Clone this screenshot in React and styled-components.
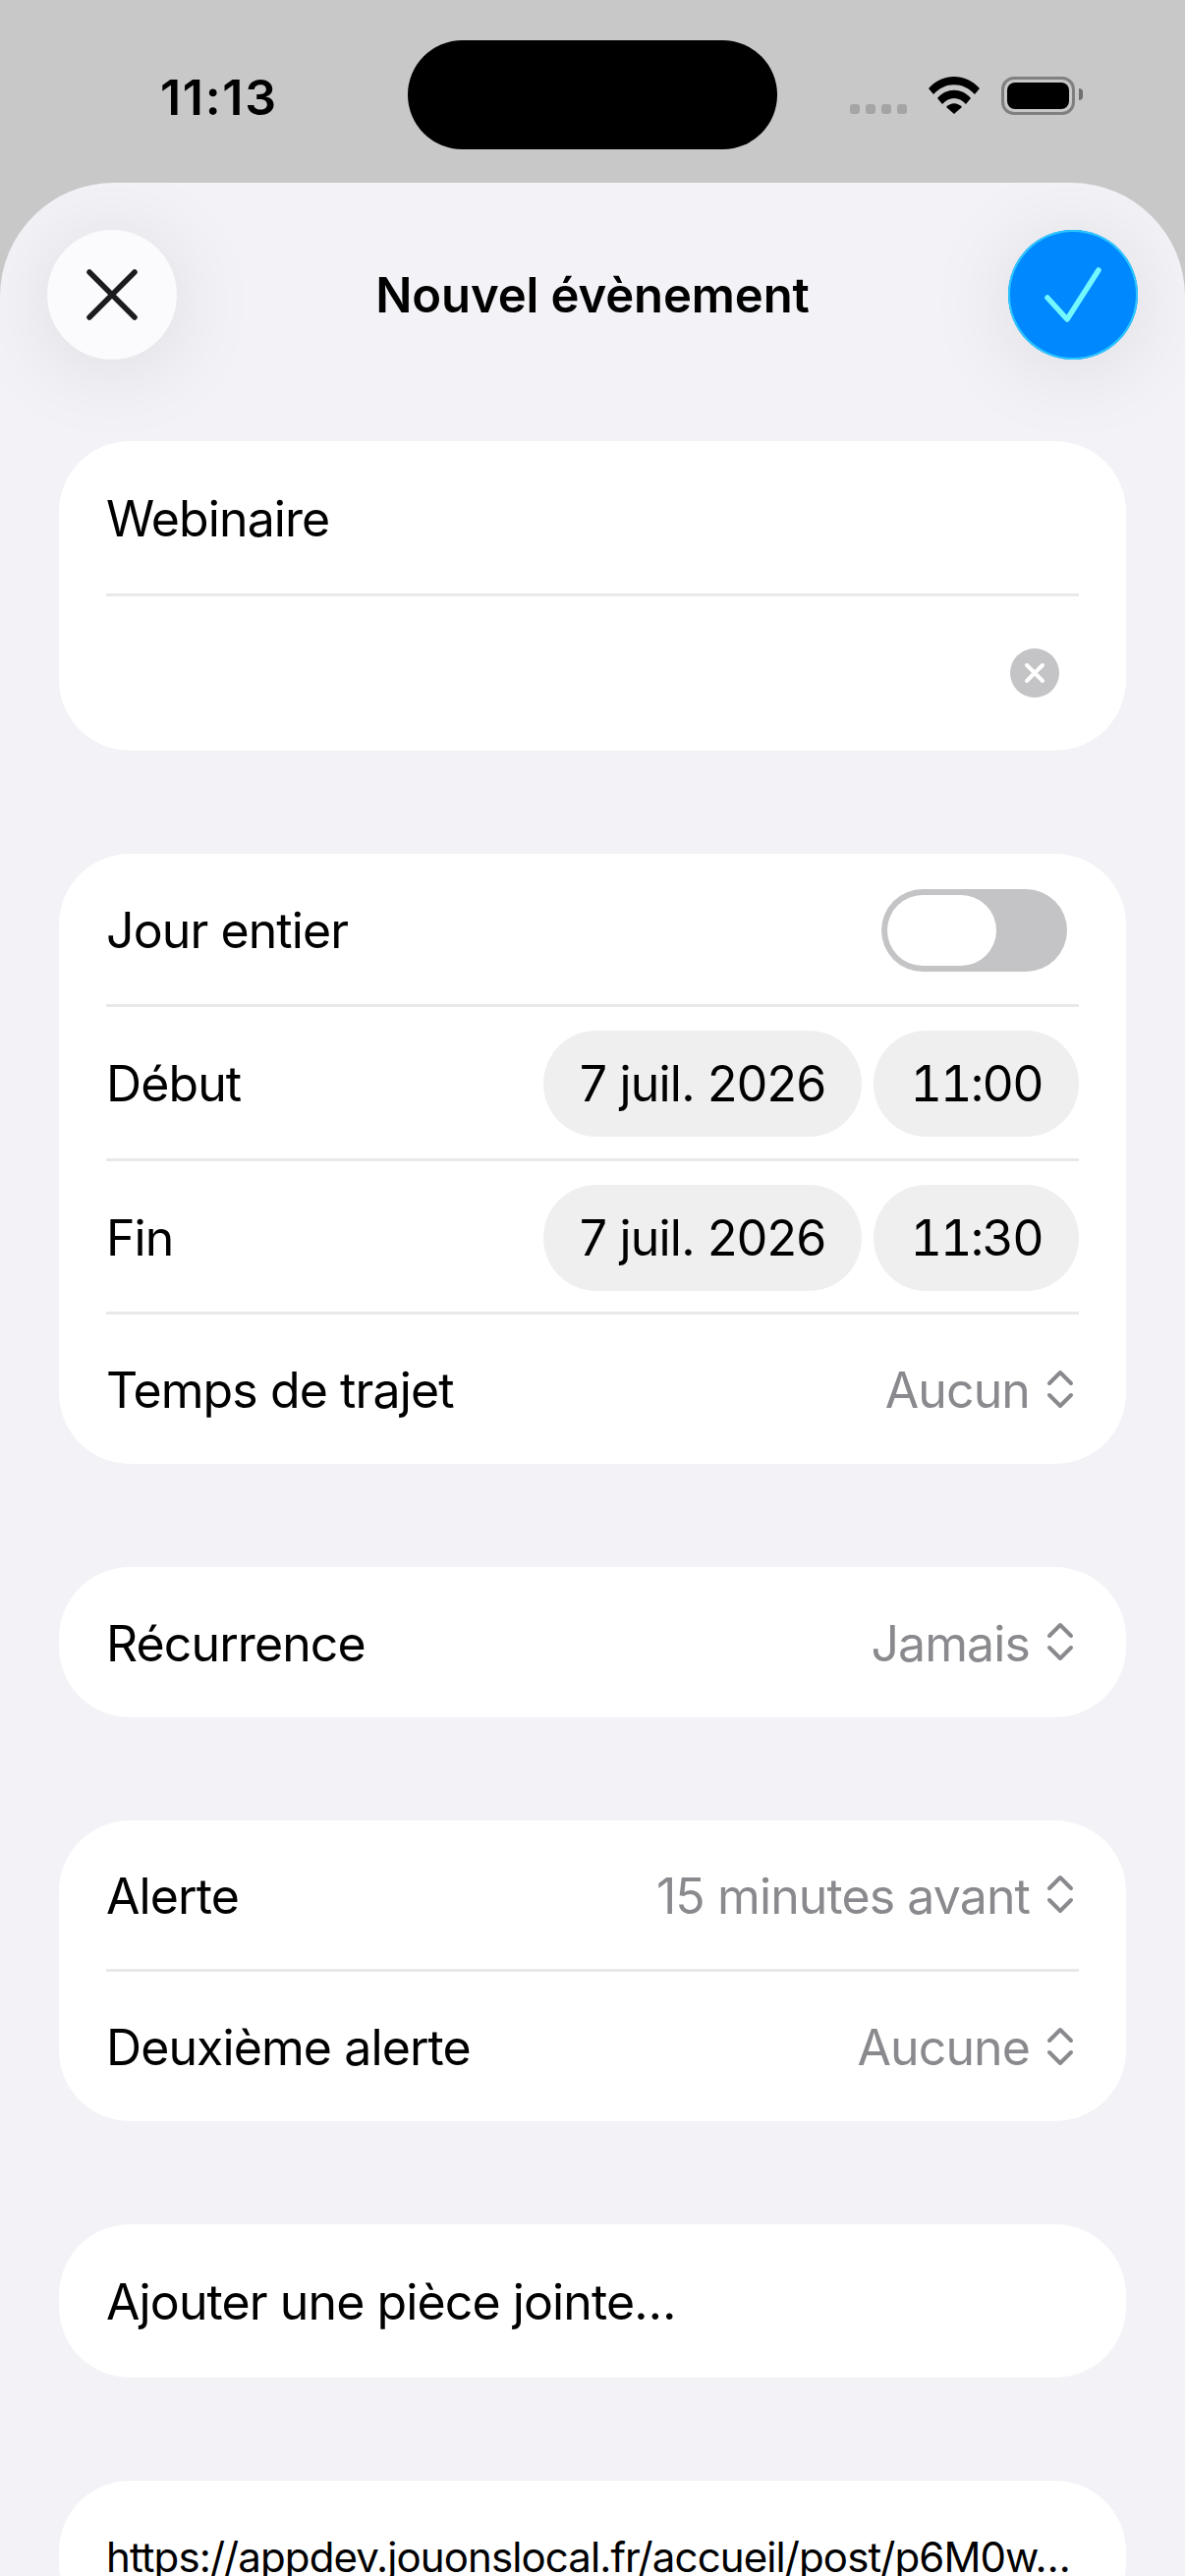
import styled, { createGlobalStyle } from "styled-components";

const GlobalStyle = createGlobalStyle`
  html, body {
    margin: 0;
    padding: 0;
    background: #c8c8c8;
  }
  * {
    box-sizing: border-box;
  }
`;

const Screen = styled.div`
  width: 1206px;
  height: 2622px;
  overflow: hidden;
  display: flex;
  flex-direction: column;
  background: #c8c8c8;
  font-family: Inter, "Liberation Sans", sans-serif;
  color: #000;
`;

const StatusBar = styled.div`
  height: 186px;
  flex: none;
  display: grid;
  grid-template-columns: 415px 376px 1fr;
  padding-top: 41px;
  align-items: start;
`;

const Clock = styled.div`
  font-size: 50px;
  font-weight: 600;
  line-height: 60px;
  margin: 28px 0 0 163px;
  letter-spacing: 1.7px;
`;

const Island = styled.div`
  height: 111px;
  border-radius: 56px;
  background: #000;
`;

const StatusIcons = styled.div`
  display: flex;
  align-items: flex-start;
  margin: 37px 0 0 74px;
`;

const Dots = styled.div`
  display: flex;
  gap: 6px;
  margin: 28px 22px 0 0;
`;

const Dot = styled.span`
  width: 10px;
  height: 10px;
  border-radius: 3px;
  background: #a5a5a5;
`;

const Battery = styled.div`
  width: 75px;
  height: 39px;
  margin-left: 22px;
  padding: 3px;
  border: 3px solid #808080;
  border-radius: 13px;
  position: relative;

  &::after {
    content: "";
    position: absolute;
    right: -11px;
    top: 9px;
    width: 4px;
    height: 12px;
    border-radius: 0 6px 6px 0;
    background: #707070;
  }
`;

const BatteryFill = styled.div`
  height: 100%;
  border-radius: 8px;
  background: #000;
`;

const Sheet = styled.div`
  flex: 1;
  overflow: hidden;
  background: #f2f2f7;
  border-radius: 116px 116px 0 0;
  padding: 48px 48px 0;
`;

const Header = styled.div`
  display: flex;
  align-items: center;
  justify-content: space-between;
  margin-bottom: 83px;
`;

const RoundButton = styled.div`
  width: 132px;
  height: 132px;
  border-radius: 50%;
  display: flex;
  align-items: center;
  justify-content: center;
  background: ${(p) => (p.$primary ? "#0088ff" : "#fbfbfe")};
  box-shadow: ${(p) => (p.$primary ? "inset 0 0 0 2px #2cc6ff, " : "")}0 8px 90px rgba(0, 0, 0, 0.1);
`;

const Title = styled.div`
  font-size: 49px;
  font-weight: 600;
  letter-spacing: -0.1px;
`;

const Cards = styled.div`
  display: flex;
  flex-direction: column;
  gap: 105px;
  margin: 0 12px;
`;

const Card = styled.div`
  background: #fff;
  border-radius: 72px;
  padding: 0 48px;
`;

const Row = styled.div`
  height: ${(p) => p.$h}px;
  padding: ${(p) => (p.$small ? "0 0 2px" : "2px 0 0")};
  display: flex;
  align-items: center;
  justify-content: space-between;
  font-size: ${(p) => (p.$small ? 42 : 50)}px;
  letter-spacing: -0.9px;
  white-space: nowrap;

  & + & {
    border-top: 3px solid #e9e9eb;
  }
`;

const Value = styled.div`
  display: flex;
  align-items: center;
  gap: 17px;
  color: #8a8a8e;
`;

const ChevronIcon = styled.svg`
  width: 28px;
  height: 40px;
  margin: -3px 5px 0 0;
`;

const Chevrons = () => (
  <ChevronIcon viewBox="0 0 28 40" fill="none" stroke="#8a8a8e" strokeWidth="4" strokeLinecap="round" strokeLinejoin="round">
    <path d="M3 14 L14 3 L25 14" />
    <path d="M3 26 L14 37 L25 26" />
  </ChevronIcon>
);

const Pills = styled.div`
  display: flex;
  gap: 12px;
`;

const Pill = styled.div`
  height: 108px;
  padding: 0 37px;
  border-radius: 54px;
  background: #efeff0;
  display: flex;
  align-items: center;
  font-variant-numeric: ${(p) => (p.$time ? "tabular-nums" : "normal")};
  letter-spacing: ${(p) => (p.$time ? "-1.7px" : "-0.8px")};
`;

const Toggle = styled.div`
  width: 189px;
  height: 84px;
  margin-right: 12px;
  padding: 6px;
  border-radius: 42px;
  background: #c4c4c6;
`;

const Thumb = styled.div`
  width: 111px;
  height: 72px;
  border-radius: 36px;
  background: #fff;
`;

const ClearButton = styled.div`
  width: 50px;
  height: 50px;
  margin: -3px 20px 0 auto;
  border-radius: 50%;
  background: #c4c4c6;
  display: flex;
  align-items: center;
  justify-content: center;
`;

function App() {
  return (
    <Screen>
      <GlobalStyle />
      <StatusBar>
        <Clock>11:13</Clock>
        <Island />
        <StatusIcons>
          <Dots>
            <Dot />
            <Dot />
            <Dot />
            <Dot />
          </Dots>
          <svg width="52" height="38" viewBox="0 0 52 38" fill="#000">
            <path d="M0 12 C14 -4 38 -4 52 12 L47 18 C35 5 17 5 5 18 Z" />
            <path d="M9 22 C18 11 34 11 43 22 L38 28 C31 20 21 20 14 28 Z" />
            <path d="M18 31 C23 26 29 26 34 31 L26 38 Z" />
          </svg>
          <Battery>
            <BatteryFill />
          </Battery>
        </StatusIcons>
      </StatusBar>
      <Sheet>
        <Header>
          <RoundButton>
            <svg width="52" height="52" viewBox="0 0 52 52" fill="none" stroke="#1c1c1e" strokeWidth="5.5" strokeLinecap="round">
              <path d="M3 3 L49 49 M49 3 L3 49" />
            </svg>
          </RoundButton>
          <Title>Nouvel évènement</Title>
          <RoundButton $primary>
            <svg width="60" height="56" viewBox="0 0 60 56" fill="none" stroke="#73f8ff" strokeWidth="5.5" strokeLinecap="round" strokeLinejoin="round">
              <path d="M4 31 L24 53 L56 3" />
            </svg>
          </RoundButton>
        </Header>
        <Cards>
          <Card>
            <Row $h={155}>Webinaire</Row>
            <Row $h={160}>
              <ClearButton>
                <svg width="22" height="22" viewBox="0 0 22 22" fill="none" stroke="#fff" strokeWidth="4" strokeLinecap="round">
                  <path d="M3 3 L19 19 M19 3 L3 19" />
                </svg>
              </ClearButton>
            </Row>
          </Card>
          <Card>
            <Row $h={153}>
              Jour entier
              <Toggle>
                <Thumb />
              </Toggle>
            </Row>
            <Row $h={157}>
              Début
              <Pills>
                <Pill>7 juil. 2026</Pill>
                <Pill $time>11:00</Pill>
              </Pills>
            </Row>
            <Row $h={156}>
              Fin
              <Pills>
                <Pill>7 juil. 2026</Pill>
                <Pill $time>11:30</Pill>
              </Pills>
            </Row>
            <Row $h={155}>
              Temps de trajet
              <Value>
                Aucun
                <Chevrons />
              </Value>
            </Row>
          </Card>
          <Card>
            <Row $h={153}>
              Récurrence
              <Value>
                Jamais
                <Chevrons />
              </Value>
            </Row>
          </Card>
          <Card>
            <Row $h={151}>
              Alerte
              <Value>
                15 minutes avant
                <Chevrons />
              </Value>
            </Row>
            <Row $h={155}>
              Deuxième alerte
              <Value>
                Aucune
                <Chevrons />
              </Value>
            </Row>
          </Card>
          <Card>
            <Row $h={156}>Ajouter une pièce jointe…</Row>
          </Card>
          <Card>
            <Row $h={156} $small>https://appdev.jouonslocal.fr/accueil/post/p6M0w…</Row>
          </Card>
        </Cards>
      </Sheet>
    </Screen>
  );
}

export default App;
